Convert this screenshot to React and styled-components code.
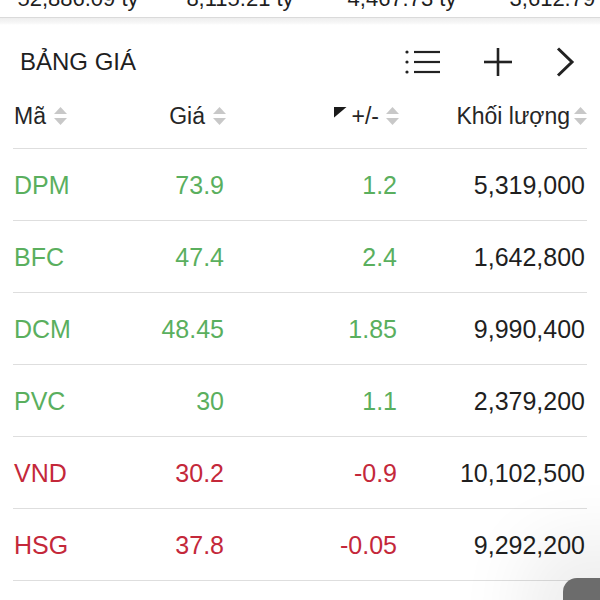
import React from "react"
import styled, { createGlobalStyle } from "styled-components"

const GlobalStyle = createGlobalStyle`
  html, body {
    margin: 0;
    padding: 0;
    background: #fff;
  }
  body {
    font-family: "Liberation Sans", Arial, sans-serif;
    color: #1f1f1f;
    overflow: hidden;
  }
`

const GREEN = "#5aaf5e"
const RED = "#c4283a"

const Screen = styled.div`
  position: relative;
  width: 600px;
  height: 600px;
  overflow: hidden;
  background: #fff;
`

const SummaryStrip = styled.div`
  display: grid;
  grid-template-columns: repeat(4, 162px);
  justify-items: center;
  align-items: start;
  height: 17px;
  margin-left: -3px;
  overflow: hidden;
  border-bottom: 1px solid #dadada;
  font-size: 22px;
  line-height: 22px;
  white-space: nowrap;
`

const SummaryValue = styled.span`
  margin-top: -12px;
`

const StripShade = styled.div`
  height: 7px;
  background: linear-gradient(#eeeeee, #f7f7f7 70%, #ffffff);
`

const TitleBar = styled.div`
  display: flex;
  align-items: center;
  justify-content: space-between;
  height: 26px;
  padding: 24px 25px 0 20px;
`

const Title = styled.h2`
  margin: 0;
  font-size: 24px;
  font-weight: 400;
  line-height: 26px;
  color: #1f1f1f;
`

const Actions = styled.div`
  display: flex;
  align-items: center;
  gap: 42px;
  color: #222;
`

const Table = styled.div`
  padding: 0 13px;
`

const cols = "100px 113px 173px 1fr"

const HeadRow = styled.div`
  display: grid;
  grid-template-columns: ${cols};
  height: 26px;
  padding: 28px 0 19px;
  border-bottom: 1px solid #dedede;
`

const HeadCell = styled.div`
  display: flex;
  align-items: center;
  justify-content: ${({ $left }) => ($left ? "flex-start" : "flex-end")};
  gap: ${({ $gap }) => $gap || 8}px;
  padding-left: ${({ $left }) => ($left ? 1 : 0)}px;
  font-size: 23px;
  line-height: 26px;
  color: #262626;
  white-space: nowrap;
`

const Marker = styled.span`
  width: 13px;
  height: 11px;
  margin-right: -2px;
  align-self: flex-start;
  margin-top: 4px;
  background: #1a1a1a;
  clip-path: polygon(0 0, 100% 0, 0 100%);
`

const Row = styled.div`
  display: grid;
  grid-template-columns: ${cols};
  align-items: center;
  height: 71px;
  border-bottom: 1px solid #dedede;
`

const Cell = styled.div`
  font-size: 25px;
  line-height: 28px;
  text-align: ${({ $left }) => ($left ? "left" : "right")};
  padding: ${({ $left }) => ($left ? "0 0 0 1px" : "0 2px 0 0")};
  color: ${({ $tone }) => ($tone === "up" ? GREEN : $tone === "down" ? RED : "#1f1f1f")};
  white-space: nowrap;
`

const FloatButton = styled.div`
  position: absolute;
  left: 563px;
  top: 578px;
  width: 70px;
  height: 70px;
  border-radius: 14px;
  background: #6c6c6c;
  box-shadow: 0 0 70px 40px rgba(0, 0, 0, 0.07);
`

const SortIcon = () => (
  <svg width="13" height="18" viewBox="0 0 13 18">
    <polygon points="6.5,0 13,7 0,7" fill="#c8c8c8" />
    <polygon points="0,11 13,11 6.5,18" fill="#c8c8c8" />
  </svg>
)

const ListIcon = () => (
  <svg width="36" height="26" viewBox="0 0 36 26">
    <g fill="#222">
      <circle cx="2" cy="3" r="1.6" />
      <circle cx="2" cy="13" r="1.6" />
      <circle cx="2" cy="23" r="1.6" />
    </g>
    <g stroke="#222" strokeWidth="2.2">
      <line x1="9" y1="3" x2="35" y2="3" />
      <line x1="9" y1="13" x2="35" y2="13" />
      <line x1="9" y1="23" x2="35" y2="23" />
    </g>
  </svg>
)

const PlusIcon = () => (
  <svg width="30" height="30" viewBox="0 0 30 30">
    <g stroke="#222" strokeWidth="2.6">
      <line x1="15" y1="1" x2="15" y2="29" />
      <line x1="1" y1="15" x2="29" y2="15" />
    </g>
  </svg>
)

const ChevronIcon = () => (
  <svg width="20" height="30" viewBox="0 0 20 30">
    <polyline
      points="3,1.5 17,15 3,28.5"
      fill="none"
      stroke="#222"
      strokeWidth="3"
      strokeLinejoin="miter"
    />
  </svg>
)

const summary = ["52,886.09 tỷ", "8,115.21 tỷ", "4,467.73 tỷ", "3,612.79 tỷ"]

const stocks = [
  { code: "DPM", price: "73.9", change: "1.2", volume: "5,319,000", tone: "up" },
  { code: "BFC", price: "47.4", change: "2.4", volume: "1,642,800", tone: "up" },
  { code: "DCM", price: "48.45", change: "1.85", volume: "9,990,400", tone: "up" },
  { code: "PVC", price: "30", change: "1.1", volume: "2,379,200", tone: "up" },
  { code: "VND", price: "30.2", change: "-0.9", volume: "10,102,500", tone: "down" },
  { code: "HSG", price: "37.8", change: "-0.05", volume: "9,292,200", tone: "down" },
]

const App = () => {
  return (
    <Screen>
      <GlobalStyle />
      <SummaryStrip>
        {summary.map((s, i) => (
          <SummaryValue key={i}>{s}</SummaryValue>
        ))}
      </SummaryStrip>
      <StripShade />
      <TitleBar>
        <Title>BẢNG GIÁ</Title>
        <Actions>
          <ListIcon />
          <PlusIcon />
          <ChevronIcon />
        </Actions>
      </TitleBar>
      <Table>
        <HeadRow>
          <HeadCell $left>
            Mã <SortIcon />
          </HeadCell>
          <HeadCell>
            Giá <SortIcon />
          </HeadCell>
          <HeadCell $gap={7}>
            <Marker />
            +/- <SortIcon />
          </HeadCell>
          <HeadCell $gap={4}>
            Khối lượng<SortIcon />
          </HeadCell>
        </HeadRow>
        {stocks.map((s) => (
          <Row key={s.code}>
            <Cell $left $tone={s.tone}>{s.code}</Cell>
            <Cell $tone={s.tone}>{s.price}</Cell>
            <Cell $tone={s.tone}>{s.change}</Cell>
            <Cell>{s.volume}</Cell>
          </Row>
        ))}
      </Table>
      <FloatButton />
    </Screen>
  )
}

export default App
